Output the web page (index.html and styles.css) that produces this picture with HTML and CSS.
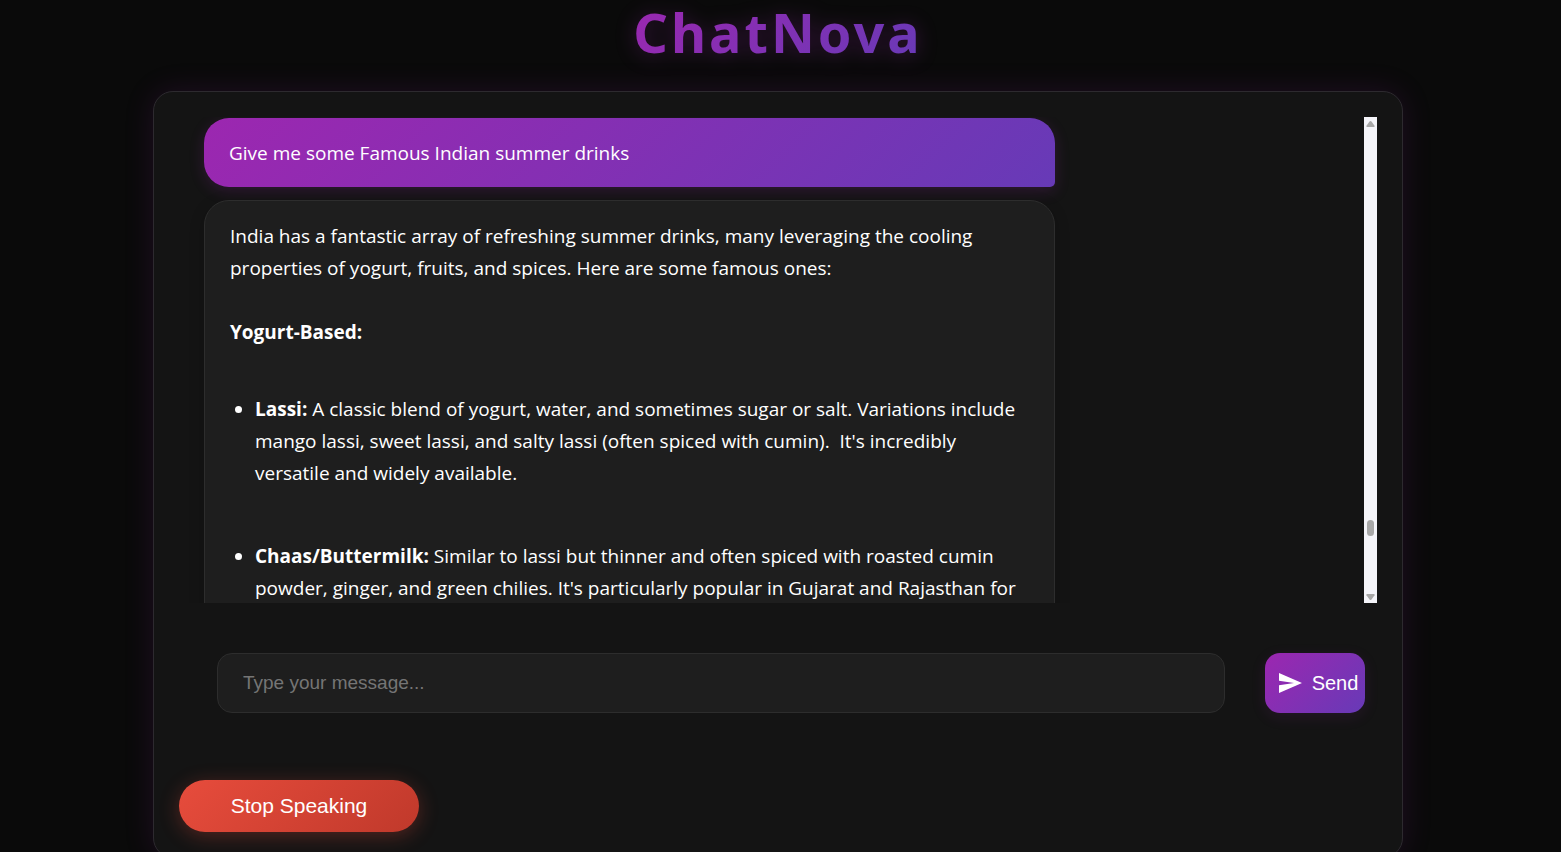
FILE: index.html
```html
<!DOCTYPE html>
<html lang="en">
<head>
<meta charset="utf-8">
<title>ChatNova</title>
<link rel="stylesheet" href="styles.css">
</head>
<body>
<h1 class="brand"><span class="brand-text">ChatNova</span></h1>
<main class="panel">
  <section class="chat">
    <div class="messages">
      <div class="message user">Give me some Famous Indian summer drinks</div>
      <div class="message bot">
        <p>India has a fantastic array of refreshing summer drinks, many leveraging the cooling<br>properties of yogurt, fruits, and spices. Here are some famous ones:</p>
        <p><strong>Yogurt-Based:</strong></p>
        <ul>
          <li><strong>Lassi:</strong> A classic blend of yogurt, water, and sometimes sugar or salt. Variations include<br>mango lassi, sweet lassi, and salty lassi (often spiced with cumin).&nbsp; It's incredibly<br>versatile and widely available.</li>
          <li><strong>Chaas/Buttermilk:</strong> Similar to lassi but thinner and often spiced with roasted cumin<br>powder, ginger, and green chilies. It's particularly popular in Gujarat and Rajasthan for</li>
        </ul>
      </div>
    </div>
    <div class="scrollbar" aria-hidden="true">
      <svg class="arrow" viewBox="0 0 13 13"><path d="M2.5 10 V8.800 L5.500 4.500 Q6.500 3.500 7.500 4.500 L10.500 8.800 V10Z"/></svg>
      <span class="thumb"></span>
      <svg class="arrow" viewBox="0 0 13 13"><path d="M2.500 4 V5.200 L5.500 9.500 Q6.500 10.500 7.500 9.500 L10.500 5.200 V4Z"/></svg>
    </div>
  </section>
  <form class="composer">
    <input class="field" type="text" placeholder="Type your message..." aria-label="Message">
    <button class="send" type="button">
      <svg class="send-icon" viewBox="0 0 24 24"><path d="M1 2 L24 12 L1 22 V14.200 L16 12 L1 9.800Z"/></svg>
      Send
    </button>
  </form>
  <button class="stop" type="button">Stop Speaking</button>
</main>
</body>
</html>
```
FILE: styles.css
```css
* {
  box-sizing: border-box;
}

body {
  margin: 0;
  padding: 0 5px 0 0;
  height: 100vh;
  overflow: hidden;
  background: #0a0a0a;
  color: #fff;
  font: 19px/32px "Open Sans", "Noto Sans", sans-serif;
}

.brand {
  width: fit-content;
  margin: 0 auto 27px;
  font: 700 54px/64px "Noto Sans", "Open Sans", sans-serif;
  letter-spacing: 3px;
  filter: drop-shadow(0 2px 10px rgba(156, 39, 176, 0.3));
}

.brand-text {
  background: linear-gradient(135deg, #9c27b0, #673ab7);
  background-clip: text;
  color: transparent;
}

.panel {
  width: 100%;
  max-width: 1250px;
  margin: 0 auto;
  padding: 25px;
  border: 1px solid #2d2a2f;
  border-radius: 20px;
  background: #141414;
  box-shadow: 0 0 30px rgba(156, 39, 176, 0.15);
}

.chat {
  display: flex;
  height: 486px;
}

.messages {
  flex: 1;
  overflow: hidden;
  padding: 1px 25px 0;
}

.message {
  width: 75%;
  margin-bottom: 13px;
  padding: 19px 25px 18px;
  border-radius: 25px;
}

.user {
  border-bottom-right-radius: 5px;
  background: linear-gradient(135deg, #9c27b0, #673ab7);
  box-shadow: 0 4px 15px rgba(156, 39, 176, 0.2);
}

.bot {
  border: 1px solid #2d2d2d;
  background: #1e1e1e;
  box-shadow: 0 4px 15px rgba(0, 0, 0, 0.2);
}

.bot p {
  margin: 0 0 32px;
}

.bot ul {
  margin: 45px 0 0;
  padding-left: 25px;
}

.bot li {
  margin-bottom: 51px;
}

.scrollbar {
  display: flex;
  flex-direction: column;
  align-items: center;
  width: 13px;
  background: #f5f5fa;
}

.arrow {
  width: 13px;
  height: 13px;
  fill: #a8a8a8;
}

.thumb {
  width: 7px;
  height: 16px;
  margin: 390px 0 auto;
  border-radius: 4px;
  background: #a8a8a8;
}

.composer {
  display: flex;
  gap: 40px;
  margin: 50px 12px 67px 38px;
}

.field,
.send,
.stop {
  font: 20px/24px "Liberation Sans", Arial, sans-serif;
  color: #fff;
}

.field {
  flex: 1;
  min-width: 0;
  height: 60px;
  padding: 0 25px;
  border: 1px solid #2d2d2d;
  border-radius: 15px;
  background: #1e1e1e;
  font-size: 19px;
}

.field::placeholder {
  color: #757575;
}

.send {
  display: flex;
  align-items: center;
  justify-content: center;
  gap: 10px;
  width: 100px;
  padding: 0 0 0 6px;
  border: 0;
  border-radius: 15px;
  background: linear-gradient(135deg, #9c27b0, #673ab7);
  box-shadow: 0 4px 15px rgba(156, 39, 176, 0.12);
}

.send-icon {
  flex: none;
  width: 24px;
  height: 24px;
  fill: #fff;
}

.stop {
  display: block;
  width: 240px;
  height: 52px;
  border: 0;
  border-radius: 26px;
  background: linear-gradient(135deg, #e74c3c, #c0392b);
  box-shadow: 0 4px 20px rgba(231, 76, 60, 0.3);
  font-size: 21px;
}
```
